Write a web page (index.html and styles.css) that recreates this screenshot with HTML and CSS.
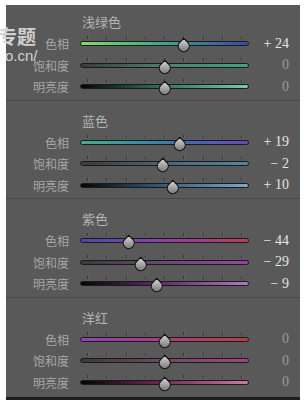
FILE: index.html
```html
<!DOCTYPE html>
<html>
<head>
  <title>HSL</title>
  <link rel="stylesheet" href="styles.css">
</head>
<body>
  <div class="panel">
    <!-- watermark sits over the panel edge -->
    <div class="mark"><span class="mark-big">专题</span><span class="mark-url">o.cn/</span></div>

    <div class="group first">
      <div class="title">浅绿色</div>
      <div class="row">
        <div class="label">色相</div>
        <div class="slider"><div class="ticks"><i></i><i></i><i></i><i></i><i></i><i></i><i></i><i></i><i></i></div><div class="track hue-aqua"></div><div class="thumb" style="--v: 24"></div></div>
        <div class="value on">+ 24</div>
      </div>
      <div class="row">
        <div class="label">饱和度</div>
        <div class="slider"><div class="ticks"><i></i><i></i><i></i><i></i><i></i><i></i><i></i><i></i><i></i></div><div class="track sat-aqua"></div><div class="thumb" style="--v: 0"></div></div>
        <div class="value">0</div>
      </div>
      <div class="row">
        <div class="label">明亮度</div>
        <div class="slider"><div class="ticks"><i></i><i></i><i></i><i></i><i></i><i></i><i></i><i></i><i></i></div><div class="track lum-aqua"></div><div class="thumb" style="--v: 0"></div></div>
        <div class="value">0</div>
      </div>
    </div>

    <div class="group">
      <div class="title">蓝色</div>
      <div class="row">
        <div class="label">色相</div>
        <div class="slider"><div class="ticks"><i></i><i></i><i></i><i></i><i></i><i></i><i></i><i></i><i></i></div><div class="track hue-blue"></div><div class="thumb" style="--v: 19"></div></div>
        <div class="value on">+ 19</div>
      </div>
      <div class="row">
        <div class="label">饱和度</div>
        <div class="slider"><div class="ticks"><i></i><i></i><i></i><i></i><i></i><i></i><i></i><i></i><i></i></div><div class="track sat-blue"></div><div class="thumb" style="--v: -2"></div></div>
        <div class="value on">− 2</div>
      </div>
      <div class="row">
        <div class="label">明亮度</div>
        <div class="slider"><div class="ticks"><i></i><i></i><i></i><i></i><i></i><i></i><i></i><i></i><i></i></div><div class="track lum-blue"></div><div class="thumb" style="--v: 10"></div></div>
        <div class="value on">+ 10</div>
      </div>
    </div>

    <div class="group">
      <div class="title">紫色</div>
      <div class="row">
        <div class="label">色相</div>
        <div class="slider"><div class="ticks"><i></i><i></i><i></i><i></i><i></i><i></i><i></i><i></i><i></i></div><div class="track hue-purple"></div><div class="thumb" style="--v: -44"></div></div>
        <div class="value on">− 44</div>
      </div>
      <div class="row">
        <div class="label">饱和度</div>
        <div class="slider"><div class="ticks"><i></i><i></i><i></i><i></i><i></i><i></i><i></i><i></i><i></i></div><div class="track sat-purple"></div><div class="thumb" style="--v: -29"></div></div>
        <div class="value on">− 29</div>
      </div>
      <div class="row">
        <div class="label">明亮度</div>
        <div class="slider"><div class="ticks"><i></i><i></i><i></i><i></i><i></i><i></i><i></i><i></i><i></i></div><div class="track lum-purple"></div><div class="thumb" style="--v: -9"></div></div>
        <div class="value on">− 9</div>
      </div>
    </div>

    <div class="group last">
      <div class="title">洋红</div>
      <div class="row">
        <div class="label">色相</div>
        <div class="slider"><div class="ticks"><i></i><i></i><i></i><i></i><i></i><i></i><i></i><i></i><i></i></div><div class="track hue-magenta"></div><div class="thumb" style="--v: 0"></div></div>
        <div class="value">0</div>
      </div>
      <div class="row">
        <div class="label">饱和度</div>
        <div class="slider"><div class="ticks"><i></i><i></i><i></i><i></i><i></i><i></i><i></i><i></i><i></i></div><div class="track sat-magenta"></div><div class="thumb" style="--v: 0"></div></div>
        <div class="value">0</div>
      </div>
      <div class="row">
        <div class="label">明亮度</div>
        <div class="slider"><div class="ticks"><i></i><i></i><i></i><i></i><i></i><i></i><i></i><i></i><i></i></div><div class="track lum-magenta"></div><div class="thumb" style="--v: 0"></div></div>
        <div class="value">0</div>
      </div>
    </div>
  </div>
</body>
</html>
```

FILE: styles.css
```css
/* CSS */
body {
  margin: 0;
  background: #fff;
  font-family: "Noto Sans CJK SC", sans-serif;
}

.panel {
  position: relative;
  margin: 5px 4px 0 6px;
  width: 294px;
  background: #595959;
  border-bottom: 3px solid #1e1e1e;
}

.mark {
  position: absolute;
  left: -8px;
  top: 21px;
  display: flex;
  flex-direction: column;
  color: #d2d2d2;
  z-index: 2;
}

.mark-big {
  font-size: 19px;
  font-weight: bold;
  line-height: 19px;
}

.mark-url {
  font-family: "Liberation Sans", sans-serif;
  font-size: 15px;
  line-height: 15px;
  margin-top: 3px;
  margin-left: 7px;
}

.group {
  padding: 9px 0 2px;
  border-top: 1px solid #474747;
}

.group.first {
  padding-top: 6px;
  border-top: none;
}

.group.last {
  padding-bottom: 4px;
}

.title {
  margin-left: 76px;
  height: 22px;
  line-height: 22px;
  font-size: 13px;
  color: #b4b4b4;
}

.row {
  display: flex;
  align-items: center;
  height: 21.5px;
}

.label {
  width: 63px;
  margin-right: 11px;
  text-align: right;
  font-size: 12px;
  color: #a6a6a6;
}

.slider {
  position: relative;
  width: 169px;
  height: 21.5px;
  box-sizing: border-box;
  padding-bottom: 5px;
  display: flex;
  flex-direction: column;
  justify-content: center;
}

.ticks {
  display: flex;
  justify-content: space-between;
  margin: 0 7px 2px 7px;
  height: 3px;
}

.ticks i {
  width: 1px;
  height: 3px;
  background: #363636;
  box-shadow: 1px 0 #666;
}

.track {
  height: 3px;
  border: 1px solid #1a1a1a;
  border-radius: 3px;
}

.thumb {
  position: absolute;
  top: 7px;
  left: calc(50% + var(--v) * 0.82px);
  margin-left: -5.75px;
  width: 11.5px;
  height: 11.5px;
  box-sizing: border-box;
  border: 1.5px solid #141414;
  border-radius: 0 50% 50% 50%;
  background: linear-gradient(135deg, #d4d4d4, #8c8c8c 70%, #7a7a7a);
  transform: rotate(45deg);
}

.value {
  width: 40px;
  text-align: right;
  font-family: "Liberation Serif", serif;
  font-size: 14px;
  color: #9a9a9a;
}

.value.on {
  color: #e6e6e6;
}

/* track colours */
.hue-aqua { background: linear-gradient(to right, #86d869, #3fae83 45%, #3b7b9a 70%, #3d4aa0); }
.sat-aqua { background: linear-gradient(to right, #3a3a3a, #4f7f72 50%, #3fa386); }
.lum-aqua { background: linear-gradient(to right, #050505, #2b6b5c 45%, #7ac9b2); }

.hue-blue { background: linear-gradient(to right, #47ad8e, #3b87a8 40%, #4a63b0 70%, #6e47b6); }
.sat-blue { background: linear-gradient(to right, #3a3a3a, #4b6678 50%, #4d86a6); }
.lum-blue { background: linear-gradient(to right, #050505, #2f5675 45%, #79a9c8); }

.hue-purple { background: linear-gradient(to right, #4848ae, #7e45ae 35%, #9c3c94 65%, #b8444e); }
.sat-purple { background: linear-gradient(to right, #3a3a3a, #6a4a74 50%, #9a42a6); }
.lum-purple { background: linear-gradient(to right, #050505, #5a2a66 45%, #b874c6); }

.hue-magenta { background: linear-gradient(to right, #8c46ae, #a83c8c 40%, #b23c64 70%, #b84040); }
.sat-magenta { background: linear-gradient(to right, #3a3a3a, #6f4a62 50%, #a8447e); }
.lum-magenta { background: linear-gradient(to right, #050505, #6a2450 45%, #c87aa6); }
```
